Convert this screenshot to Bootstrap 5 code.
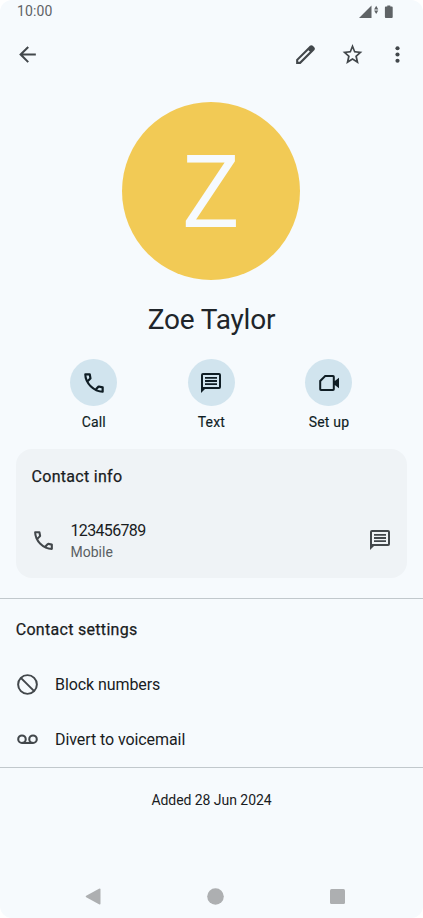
<!DOCTYPE html>
<html lang="en">
<head>
<meta charset="utf-8">
<meta name="viewport" content="width=device-width, initial-scale=1">
<title>Zoe Taylor</title>
<link href="https://cdn.jsdelivr.net/npm/bootstrap@5.3.0/dist/css/bootstrap.min.css" rel="stylesheet">
<style>
body{background:#fff;font-family:Roboto,sans-serif;color:#191c1e}
.phone{width:423px;height:918px;background:#f6fafd;border-radius:12px}
.phone svg{display:block;flex:none;fill:currentColor}
.statusbar{height:24px;padding:0 28.5px 0 17px;color:#5f6366;font-size:14px;line-height:23px;letter-spacing:.1px}
.signals{margin-top:5px}
.appbar{height:62px;padding:0 13px 0.5px 15px;color:#42474b}
.star{margin-left:22px}
.more{margin-left:20px}
.avatar{width:178px;height:178px;margin:16px auto 0 122px;padding-bottom:6px;background:#f2ca55;color:#f6fafe;font:400 101px/1 "Open Sans",sans-serif}
.person{height:79.4px;padding-top:23px;font-size:28px;line-height:34px;letter-spacing:-.2px;color:#20252a}
.actions{padding:0 35px;height:89.6px}
.action{width:117.6px;font-size:14px;line-height:20px;letter-spacing:.2px;color:#0f1d24;-webkit-text-stroke:.15px #0f1d24}
.disc{width:47px;height:47px;background:#d1e4ee;margin-bottom:5.5px}
.info{margin:0 16px;height:129px;background:#eff3f6;border-radius:16px;padding:18px 15px 0}
.title{font-size:16px;line-height:20px;font-weight:400;letter-spacing:.3px;-webkit-text-stroke:.25px #191c1e}
.info .title{margin-left:.5px!important}
.phone-row{margin-top:33px}
.phone-row svg{margin-bottom:1px}
.phone-text{margin-left:14.5px}
.ic{color:#42474b}
.number{font-size:16px;line-height:22px;letter-spacing:-.66px}
.kind{font-size:14px;line-height:20px;color:#5a5f63}
.settings{margin-top:20px;height:170px;border-top:1px solid #c1c8cc;border-bottom:1px solid #c1c8cc;padding:21px 15px 0}
.settings .title{margin-left:.7px!important;margin-bottom:18px!important}
.setting{font-size:16px;height:55px;letter-spacing:-.08px}
.setting svg{margin-bottom:1px}
.setting span{margin-left:15px}
.added{margin-top:22px;font-size:14px;line-height:20px;letter-spacing:-.05px}
.navkeys{height:44px;padding:0 78px 0 85px;color:#adafb1}
</style>
</head>
<body>
<svg width="0" height="0" class="position-absolute" aria-hidden="true">
<symbol id="call" viewBox="0 0 24 24"><path d="M19.95 21q-3.1 0-6.15-1.35t-5.55-3.85-3.88-5.55Q3 7.15 3 4.05q0-.45.3-.75t.75-.3H8.1q.35 0 .62.24.28.24.33.56l.65 3.5q.05.4-.02.68-.08.27-.28.47L6.98 10.9q.5.93 1.19 1.79.69.86 1.51 1.66.78.78 1.63 1.44.84.66 1.79 1.21l2.35-2.35q.23-.23.59-.34.36-.11.71-.06l3.45.7q.35.1.57.36.23.26.23.59v4.05q0 .45-.3.75t-.75.3ZM6.02 9l1.65-1.65L7.25 5H5.02q.13 1.02.35 2.02T6.02 9Zm8.95 8.95q.97.43 1.99.68 1.02.25 2.04.32v-2.2l-2.35-.47Z"/></symbol>
<symbol id="chat" viewBox="0 0 24 24"><path fill-rule="evenodd" d="M4 2h16a2 2 0 0 1 2 2v12a2 2 0 0 1-2 2H6l-4 4V4a2 2 0 0 1 2-2Zm0 2v12h16V4ZM6 6h12v1.8H6ZM6 9.1h12v1.8H6ZM6 12.2h12V14H6Z"/></symbol>
</svg>
<main class="phone d-flex flex-column overflow-hidden">
  <div class="statusbar d-flex justify-content-between">
    <span>10:00</span>
    <svg class="signals" width="36" height="14" viewBox="0 0 36 14"><path d="M0 13 12.5 .5V13ZM17.2 .8 19.3 4.4H15.1ZM17.2 9 15.1 5.4H19.3ZM28.3 .5h3V1.6h1.5q.9 0 .9.9V12q0 1-.9 1h-6q-.9 0-.9-1V2.5q0-.9.9-.9h1.5Z"/></svg>
  </div>
  <header class="appbar d-flex align-items-center">
    <svg width="25" height="25" viewBox="0 0 24 24"><path d="m7.8 13 5.6 5.6L12 20l-8-8 8-8 1.4 1.4L7.8 11H20v2Z"/></svg>
    <svg class="ms-auto" width="25" height="25" viewBox="0 0 24 24"><path fill-rule="evenodd" d="M3 21v-4.2L16.2 3.6q.6-.6 1.4-.6t1.4.6l1.4 1.4q.6.6.6 1.4t-.6 1.4L7.2 21Zm2-2h1.4l9.8-9.8-1.4-1.4L5 17.6Z"/></svg>
    <svg class="star" width="25" height="25" viewBox="0 0 24 24"><path fill-rule="evenodd" d="m21.5 9.24-6.9-.62L12 2 9.4 8.63l-6.9.61 5.1 4.73L6 21 12 17.27 18 21l-1.6-7.03ZM12 15.3l-3.5 2.2.95-4.1-3.2-2.85 4.2-.38L12 6.2l1.55 3.97 4.2.38-3.2 2.85.95 4.1Z"/></svg>
    <svg class="more" width="25" height="25" viewBox="0 0 24 24"><circle cx="12" cy="6" r="2"/><circle cx="12" cy="12" r="2"/><circle cx="12" cy="18" r="2"/></svg>
  </header>
  <div class="avatar rounded-circle d-flex align-items-center justify-content-center">Z</div>
  <h1 class="person text-center fw-normal m-0"><span>Zoe Taylor</span></h1>
  <div class="actions d-flex">
    <div class="action d-flex flex-column align-items-center"><div class="disc rounded-circle d-flex align-items-center justify-content-center"><svg width="26" height="26"><use href="#call"/></svg></div><span>Call</span></div>
    <div class="action d-flex flex-column align-items-center"><div class="disc rounded-circle d-flex align-items-center justify-content-center"><svg width="24" height="24"><use href="#chat"/></svg></div><span>Text</span></div>
    <div class="action d-flex flex-column align-items-center"><div class="disc rounded-circle d-flex align-items-center justify-content-center"><svg width="24" height="24" viewBox="0 0 24 24"><path fill-rule="evenodd" d="M7.8 4H16q1.8 0 1.8 1.8V10L22 6.8v10.4L17.8 14v4.2q0 1.8-1.8 1.8H4q-1.8 0-1.8-1.8V9.6ZM8.6 6 4.2 10.4V18h11.6V6Z"/></svg></div><span>Set up</span></div>
  </div>
  <section class="info">
    <h2 class="title m-0"><span>Contact info</span></h2>
    <div class="phone-row d-flex align-items-center">
      <svg class="ic" width="25" height="25"><use href="#call"/></svg>
      <div class="phone-text"><div class="number"><span>123456789</span></div><div class="kind"><span>Mobile</span></div></div>
      <svg class="ic ms-auto" width="24" height="24"><use href="#chat"/></svg>
    </div>
  </section>
  <section class="settings">
    <h2 class="title m-0"><span>Contact settings</span></h2>
    <div class="setting d-flex align-items-center"><svg class="ic" width="25" height="25" viewBox="0 0 24 24"><g fill="none" stroke="currentColor" stroke-width="1.9"><circle cx="12" cy="12" r="9"/><path d="m5.6 5.6 12.8 12.8"/></g></svg><span>Block numbers</span></div>
    <div class="setting d-flex align-items-center"><svg class="ic" width="25" height="25" viewBox="0 0 24 24"><g fill="none" stroke="currentColor" stroke-width="2"><circle cx="6.7" cy="11.7" r="3.6"/><circle cx="17.3" cy="11.7" r="3.6"/><path d="M6.7 15.3h10.6"/></g></svg><span>Divert to voicemail</span></div>
  </section>
  <div class="added text-center"><span>Added 28 Jun 2024</span></div>
  <nav class="navkeys mt-auto d-flex justify-content-between align-items-center" aria-label="System">
    <svg width="16" height="17" viewBox="0 0 16 17"><path d="M14 .7Q15.5 0 15.5 1.5v14q0 1.5-1.5.8L1.2 9.3Q0 8.5 1.2 7.7Z"/></svg>
    <svg width="17" height="17"><circle cx="8.5" cy="8.5" r="8.3"/></svg>
    <svg width="15" height="15"><rect width="15" height="15" rx="1.5"/></svg>
  </nav>
</main>
<script src="https://cdn.jsdelivr.net/npm/bootstrap@5.3.0/dist/js/bootstrap.bundle.min.js"></script>
</body>
</html>
